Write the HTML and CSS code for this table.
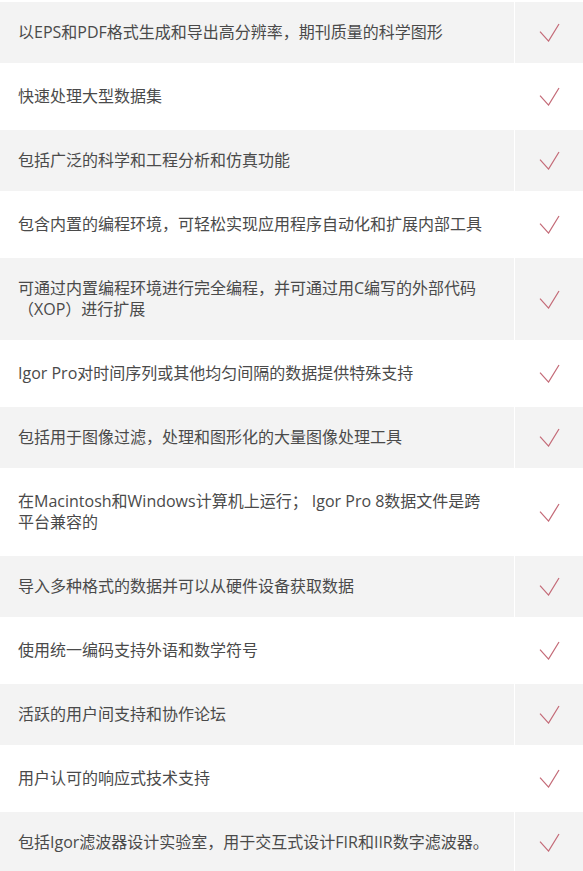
FILE: index.html
```html
<!DOCTYPE html>
<html lang="zh-CN">

<head>
    <meta charset="UTF-8">
    <meta name="viewport" content="width=device-width, initial-scale=1.0">
    <title>Igor Pro 功能</title>
    <link rel="stylesheet" href="styles.css">
</head>

<body>

<div class="features">
    <div class="feature">
        <div class="feature-text">以EPS和PDF格式生成和导出高分辨率，期刊质量的科学图形</div>
        <div class="feature-check"><svg viewBox="0 0 22 20"><polyline points="1,9 10,19 21,1"/></svg></div>
    </div>
    <div class="feature">
        <div class="feature-text">快速处理大型数据集</div>
        <div class="feature-check"><svg viewBox="0 0 22 20"><polyline points="1,9 10,19 21,1"/></svg></div>
    </div>
    <div class="feature">
        <div class="feature-text">包括广泛的科学和工程分析和仿真功能</div>
        <div class="feature-check"><svg viewBox="0 0 22 20"><polyline points="1,9 10,19 21,1"/></svg></div>
    </div>
    <div class="feature">
        <div class="feature-text">包含内置的编程环境，可轻松实现应用程序自动化和扩展内部工具</div>
        <div class="feature-check"><svg viewBox="0 0 22 20"><polyline points="1,9 10,19 21,1"/></svg></div>
    </div>
    <div class="feature">
        <div class="feature-text">可通过内置编程环境进行完全编程，并可通过用C编写的外部代码（XOP）进行扩展</div>
        <div class="feature-check"><svg viewBox="0 0 22 20"><polyline points="1,9 10,19 21,1"/></svg></div>
    </div>
    <div class="feature">
        <div class="feature-text">Igor Pro对时间序列或其他均匀间隔的数据提供特殊支持</div>
        <div class="feature-check"><svg viewBox="0 0 22 20"><polyline points="1,9 10,19 21,1"/></svg></div>
    </div>
    <div class="feature">
        <div class="feature-text">包括用于图像过滤，处理和图形化的大量图像处理工具</div>
        <div class="feature-check"><svg viewBox="0 0 22 20"><polyline points="1,9 10,19 21,1"/></svg></div>
    </div>
    <div class="feature">
        <div class="feature-text">在Macintosh和Windows计算机上运行； Igor Pro 8数据文件是跨平台兼容的</div>
        <div class="feature-check"><svg viewBox="0 0 22 20"><polyline points="1,9 10,19 21,1"/></svg></div>
    </div>
    <div class="feature">
        <div class="feature-text">导入多种格式的数据并可以从硬件设备获取数据</div>
        <div class="feature-check"><svg viewBox="0 0 22 20"><polyline points="1,9 10,19 21,1"/></svg></div>
    </div>
    <div class="feature">
        <div class="feature-text">使用统一编码支持外语和数学符号</div>
        <div class="feature-check"><svg viewBox="0 0 22 20"><polyline points="1,9 10,19 21,1"/></svg></div>
    </div>
    <div class="feature">
        <div class="feature-text">活跃的用户间支持和协作论坛</div>
        <div class="feature-check"><svg viewBox="0 0 22 20"><polyline points="1,9 10,19 21,1"/></svg></div>
    </div>
    <div class="feature">
        <div class="feature-text">用户认可的响应式技术支持</div>
        <div class="feature-check"><svg viewBox="0 0 22 20"><polyline points="1,9 10,19 21,1"/></svg></div>
    </div>
    <div class="feature">
        <div class="feature-text">包括Igor滤波器设计实验室，用于交互式设计FIR和IIR数字滤波器。</div>
        <div class="feature-check"><svg viewBox="0 0 22 20"><polyline points="1,9 10,19 21,1"/></svg></div>
    </div>
</div>

</body>

</html>
```

FILE: styles.css
```css
html, body {
    margin: 0;
    background: #fff;
}

body {
    font-family: "Open Sans", "Noto Sans CJK SC", sans-serif;
    font-size: 16px;
    line-height: 21px;
    color: #4a4a4a;
}

.features {
    display: flex;
    flex-direction: column;
    gap: 3px;
    margin-top: 2px;
}

.feature {
    display: flex;
}

.feature:nth-child(odd) {
    background: #f3f3f3;
}

.feature-text {
    flex: 1;
    padding: 20px 20px 20px 18px;
}

.feature-check {
    width: 68px;
    border-left: 1px solid #fff;
    display: flex;
    align-items: center;
    justify-content: center;
}

.feature-check svg {
    width: 21px;
    height: 19px;
    fill: none;
    stroke: #c46b78;
    stroke-width: 1.3;
}
```
